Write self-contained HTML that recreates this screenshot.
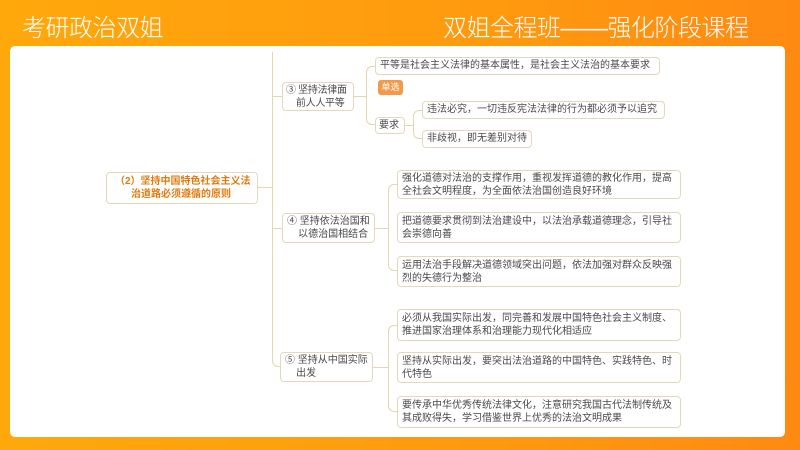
<!DOCTYPE html>
<html><head><meta charset="utf-8"><style>
*{margin:0;padding:0;box-sizing:border-box}
body{width:800px;height:450px;overflow:hidden;background:linear-gradient(90deg,#ffa80c,#ff9a0e 60%,#ff8a12);font-family:"Liberation Sans","Noto Sans CJK SC",sans-serif;position:relative}
.h{position:absolute;top:8px;color:#fff;font-size:24px;font-weight:300;letter-spacing:-0.5px}
.card{position:absolute;left:10px;top:46px;width:775px;height:391px;background:#fff;border-radius:5px}
.b{position:absolute;border:1px solid #e2d9bd;border-radius:4px;background:#fff;color:#4a4a4a;font-size:10px;line-height:13px;padding:2px 5px}
.l{position:absolute;border-color:#e4d6ad;border-style:solid;border-width:0}
.nw{white-space:nowrap}
</style></head><body>
<div class="h" style="left:22px">考研政治双姐</div>
<div class="h" style="left:443px">双姐全程班——强化阶段课程</div>
<div class="card"></div>
<div class="l" style="left:272px;top:52px;height:300px;border-left-width:1px"></div>
<div class="l" style="left:258px;top:187px;width:14px;border-top-width:1px"></div>
<div class="l" style="left:272px;top:96px;width:10px;border-top-width:1px"></div>
<div class="l" style="left:272px;top:228px;width:10px;border-top-width:1px"></div>
<div class="l" style="left:272px;top:340px;width:9px;height:27px;border-left-width:1px;border-bottom-width:1px;border-bottom-left-radius:6px"></div>
<div class="l" style="left:354px;top:96px;width:12px;border-top-width:1px"></div>
<div class="l" style="left:366px;top:66px;width:9px;height:59px;border-left-width:1px;border-top-width:1px;border-bottom-width:1px;border-radius:6px 0 0 6px"></div>
<div class="l" style="left:404px;top:125px;width:9px;border-top-width:1px"></div>
<div class="l" style="left:413px;top:110px;width:9px;height:29px;border-left-width:1px;border-top-width:1px;border-bottom-width:1px;border-radius:6px 0 0 6px"></div>
<div class="l" style="left:375px;top:228px;width:13px;border-top-width:1px"></div>
<div class="l" style="left:388px;top:184px;width:9px;height:87px;border-left-width:1px;border-top-width:1px;border-bottom-width:1px;border-radius:6px 0 0 6px"></div>
<div class="l" style="left:373px;top:367px;width:15px;border-top-width:1px"></div>
<div class="l" style="left:388px;top:325px;width:9px;height:87px;border-left-width:1px;border-top-width:1px;border-bottom-width:1px;border-radius:6px 0 0 6px"></div>
<div class="b" style="left:106px;top:172px;width:152px;height:32px;color:#e07b10;font-weight:bold;padding:2px 6px 0 8px;text-indent:-16px;padding-left:24px">（2）坚持中国特色社会主义法治道路必须遵循的原则</div>
<div class="b nw" style="left:282px;top:82px;width:72px;height:29px;padding:1px 3px;letter-spacing:-0.3px">③ 坚持法律面<br>&nbsp;&nbsp;&nbsp;&nbsp;前人人平等</div>
<div class="b nw" style="left:282px;top:213px;width:93px;height:30px;padding:1px 4px">④ 坚持依法治国和<br>&nbsp;&nbsp;&nbsp;&nbsp;以德治国相结合</div>
<div class="b nw" style="left:280px;top:352px;width:93px;height:30px;padding:1px 4px">⑤ 坚持从中国实际<br>&nbsp;&nbsp;&nbsp;&nbsp;出发</div>
<div class="b" style="left:375px;top:57px;width:285px;height:18px;padding:1px 4px">平等是社会主义法律的基本属性，是社会主义法治的基本要求</div>
<div style="position:absolute;left:378px;top:80px;width:25px;height:15px;background:#f29a4a;border-radius:3px;color:#fff;font-size:9px;line-height:15px;text-align:center">单选</div>
<div class="b" style="left:375px;top:117px;width:30px;height:17px;padding:1px 3px">要求</div>
<div class="b" style="left:422px;top:101px;width:243px;height:18px;padding:1px 4px">违法必究，一切违反宪法法律的行为都必须予以追究</div>
<div class="b" style="left:422px;top:130px;width:110px;height:18px;padding:1px 4px">非歧视，即无差别对待</div>
<div class="b" style="left:397px;top:170px;width:284px;height:29px;padding:1px 4px">强化道德对法治的支撑作用，重视发挥道德的教化作用，提高全社会文明程度，为全面依法治国创造良好环境</div>
<div class="b" style="left:397px;top:212px;width:284px;height:31px;padding:2px 4px">把道德要求贯彻到法治建设中，以法治承载道德理念，引导社会崇德向善</div>
<div class="b" style="left:397px;top:256px;width:284px;height:31px;padding:2px 4px">运用法治手段解决道德领域突出问题，依法加强对群众反映强烈的失德行为整治</div>
<div class="b" style="left:397px;top:309px;width:284px;height:32px;padding:2px 4px">必须从我国实际出发，同完善和发展中国特色社会主义制度、推进国家治理体系和治理能力现代化相适应</div>
<div class="b" style="left:397px;top:352px;width:284px;height:31px;padding:2px 4px">坚持从实际出发，要突出法治道路的中国特色、实践特色、时代特色</div>
<div class="b" style="left:397px;top:396px;width:284px;height:32px;padding:2px 4px">要传承中华优秀传统法律文化，注意研究我国古代法制传统及其成败得失，学习借鉴世界上优秀的法治文明成果</div>
</body></html>
